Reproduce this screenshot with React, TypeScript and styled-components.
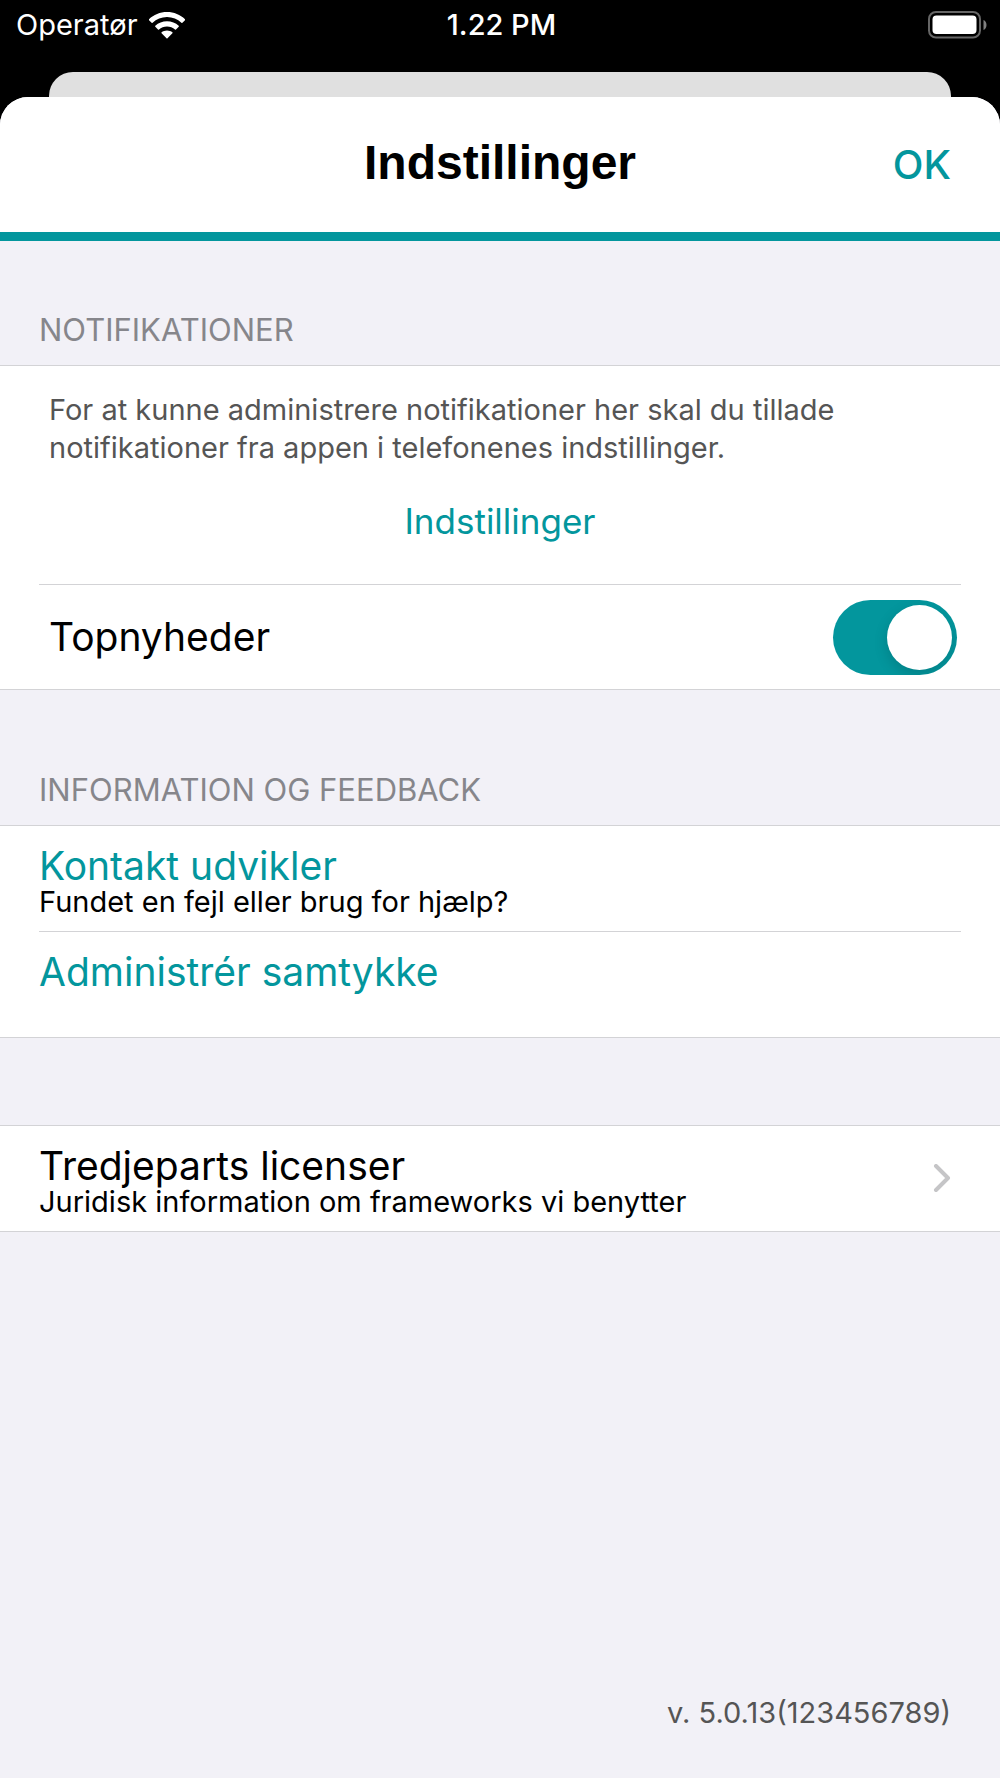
import React, { useState } from "react";
import styled, { createGlobalStyle } from "styled-components";

const teal = "#03969d";
const line = "#d3d3d6";
const ground = "#f2f1f7";
const sans = `Inter, "Liberation Sans", sans-serif`;

const GlobalStyle = createGlobalStyle`
  *, *::before, *::after { box-sizing: border-box; }
  body { margin: 0; background: #000; font-family: ${sans}; color: #000; }
  h1, h2, p { margin: 0; }
  button { margin: 0; padding: 0; border: 0; background: none; font-family: inherit; cursor: pointer; }
`;

const Screen = styled.div`
  min-height: 100vh;
  display: flex;
  flex-direction: column;
  background: #000;
`;

const StatusBar = styled.header`
  display: grid;
  grid-template-columns: 1fr auto 1fr;
  align-items: center;
  height: 72px;
  padding: 0 13px 22px 16px;
  color: #fff;
  font-size: 29px;
  line-height: 38px;
`;

const Carrier = styled.div`
  display: flex;
  align-items: center;
  gap: 11px;
`;

const Time = styled.time`
  font-weight: 500;
`;

const BatterySlot = styled.div`
  display: flex;
  justify-content: flex-end;
`;

const BackSheet = styled.div`
  height: 25px;
  margin: 0 49px;
  background: #e0e0e0;
  border-radius: 24px 24px 0 0;
`;

const Sheet = styled.main`
  flex: 1;
  display: flex;
  flex-direction: column;
  background: ${ground};
  border-radius: 28px 28px 0 0;
  overflow: hidden;
`;

const TitleBar = styled.div`
  display: grid;
  grid-template-columns: 1fr auto 1fr;
  align-items: baseline;
  height: 144px;
  padding: 36px 49px 0;
  background: #fff;
  border-bottom: 9px solid ${teal};
`;

const Title = styled.h1`
  grid-column: 2;
  font-family: "Liberation Sans", Arial, sans-serif;
  font-size: 48px;
  line-height: 60px;
  font-weight: 700;
`;

const OkButton = styled.button`
  justify-self: end;
  color: ${teal};
  font-size: 40px;
  line-height: 48px;
  font-weight: 500;
`;

const SectionLabel = styled.h2`
  height: ${({ $tall }: { $tall?: boolean }) => ($tall ? 135 : 124)}px;
  display: flex;
  align-items: flex-end;
  padding: 0 39px 16px;
  color: #86868b;
  font-size: 31px;
  line-height: 38px;
  font-weight: 400;
  text-transform: uppercase;
`;

const Spacer = styled.div`
  height: 87px;
`;

const Group = styled.section`
  background: #fff;
  border-top: 1px solid ${line};
  border-bottom: 1px solid ${line};
`;

const Divider = styled.hr`
  height: 1px;
  margin: 0 39px;
  border: 0;
  background: ${line};
`;

const Notice = styled.div`
  display: flex;
  flex-direction: column;
  align-items: center;
  gap: 32px;
  height: 218px;
  padding: 25px 49px 0;
`;

const NoticeText = styled.p`
  align-self: stretch;
  max-width: 860px;
  color: #555;
  font-size: 29px;
  line-height: 38px;
`;

const LinkButton = styled.button`
  color: ${teal};
  font-size: 35px;
  line-height: 44px;
`;

const SwitchRow = styled.label`
  display: flex;
  align-items: center;
  justify-content: space-between;
  height: 104px;
  padding: 0 43px 0 49px;
  font-size: 39px;
  line-height: 48px;
`;

const Switch = styled.input`
  appearance: none;
  display: flex;
  width: 124px;
  height: 75px;
  margin: 0;
  padding: 5px;
  border-radius: 38px;
  background: #e4e4e8;
  overflow: hidden;
  cursor: pointer;

  &::before {
    content: "";
    width: 65px;
    height: 65px;
    border-radius: 50%;
    background: #fff;
    box-shadow: 0 5px 14px rgba(0, 0, 0, 0.15);
  }

  &:checked {
    justify-content: flex-end;
    background: ${teal};
  }
`;

const RowButton = styled.button`
  display: flex;
  align-items: center;
  justify-content: space-between;
  width: 100%;
  height: 105px;
  padding: 0 49px 0 39px;
  text-align: left;
  color: #000;
`;

const RowText = styled.span`
  display: flex;
  flex-direction: column;
  height: 66px;
`;

const RowTitle = styled.span<{ $accent?: boolean }>`
  color: ${({ $accent }) => ($accent ? teal : "#000")};
  font-size: 39px;
  line-height: 40px;
`;

const RowDetail = styled.span`
  font-size: 29px;
  line-height: 32px;
`;

const Version = styled.p`
  margin-top: auto;
  padding: 0 49px 46px;
  text-align: right;
  color: #555;
  font-size: 29px;
  line-height: 38px;
`;

const WifiIcon = () => (
  <svg width="36" height="27" viewBox="0 0 36 27" fill="#fff" aria-hidden="true">
    <path d="M18 0C25 0 31.300 2.700 36 7.200Q36.500 7.700 36 8.200L33.400 10.800Q32.900 11.300 32.400 10.800C28.600 7.200 23.500 5.100 18 5.100S7.400 7.200 3.600 10.800Q3.100 11.300 2.600 10.800L0 8.200Q-.5 7.700 0 7.200C4.700 2.700 11 0 18 0Z" />
    <path d="M18 9.300C22.500 9.300 26.600 11 29.700 13.800Q30.200 14.300 29.700 14.800L27 17.400Q26.500 17.900 26 17.400C23.900 15.500 21.100 14.400 18 14.400S12.100 15.500 10 17.400Q9.500 17.900 9 17.400L6.300 14.800Q5.800 14.300 6.300 13.800C9.400 11 13.500 9.300 18 9.300Z" />
    <path d="M18 18.400C20.100 18.400 22 19.100 23.400 20.300Q23.900 20.800 23.400 21.300L18.500 26.200Q18 26.700 17.500 26.200L12.600 21.300Q12.100 20.800 12.600 20.300C14 19.100 15.900 18.400 18 18.400Z" />
  </svg>
);

const BatteryIcon = () => (
  <svg width="59" height="28" viewBox="0 0 59 28" aria-hidden="true">
    <rect x="1" y="1" width="51" height="25.500" rx="7" fill="none" stroke="#666" strokeWidth="2" />
    <rect x="4.500" y="4.500" width="44" height="18.500" rx="4" fill="#fff" />
    <path d="M55.500 9C59.500 10.500 59.500 17.500 55.500 19Z" fill="#808080" />
  </svg>
);

const ChevronIcon = () => (
  <svg width="18" height="30" viewBox="0 0 18 30" fill="none" aria-hidden="true">
    <path d="M3 2L15 14L3 26" stroke="#c5c5c7" strokeWidth="4" strokeLinecap="round" strokeLinejoin="round" />
  </svg>
);

export default function App() {
  const [topNews, setTopNews] = useState(true);

  return (
    <>
      <GlobalStyle />
      <Screen>
        <StatusBar>
          <Carrier>
            Operatør
            <WifiIcon />
          </Carrier>
          <Time>1.22 PM</Time>
          <BatterySlot>
            <BatteryIcon />
          </BatterySlot>
        </StatusBar>
        <BackSheet />
        <Sheet>
          <TitleBar>
            <Title>Indstillinger</Title>
            <OkButton type="button">OK</OkButton>
          </TitleBar>

          <SectionLabel>Notifikationer</SectionLabel>
          <Group>
            <Notice>
              <NoticeText>
                For at kunne administrere notifikationer her skal du tillade notifikationer fra appen i telefonenes
                indstillinger.
              </NoticeText>
              <LinkButton type="button">Indstillinger</LinkButton>
            </Notice>
            <Divider />
            <SwitchRow htmlFor="top-news">
              Topnyheder
              <Switch
                id="top-news"
                type="checkbox"
                checked={topNews}
                onChange={(event) => setTopNews(event.target.checked)}
              />
            </SwitchRow>
          </Group>

          <SectionLabel $tall>Information og feedback</SectionLabel>
          <Group>
            <RowButton type="button">
              <RowText>
                <RowTitle $accent>Kontakt udvikler</RowTitle>
                <RowDetail>Fundet en fejl eller brug for hjælp?</RowDetail>
              </RowText>
            </RowButton>
            <Divider />
            <RowButton type="button">
              <RowText>
                <RowTitle $accent>Administrér samtykke</RowTitle>
              </RowText>
            </RowButton>
          </Group>

          <Spacer />
          <Group>
            <RowButton type="button">
              <RowText>
                <RowTitle>Tredjeparts licenser</RowTitle>
                <RowDetail>Juridisk information om frameworks vi benytter</RowDetail>
              </RowText>
              <ChevronIcon />
            </RowButton>
          </Group>

          <Version>v. 5.0.13(123456789)</Version>
        </Sheet>
      </Screen>
    </>
  );
}
